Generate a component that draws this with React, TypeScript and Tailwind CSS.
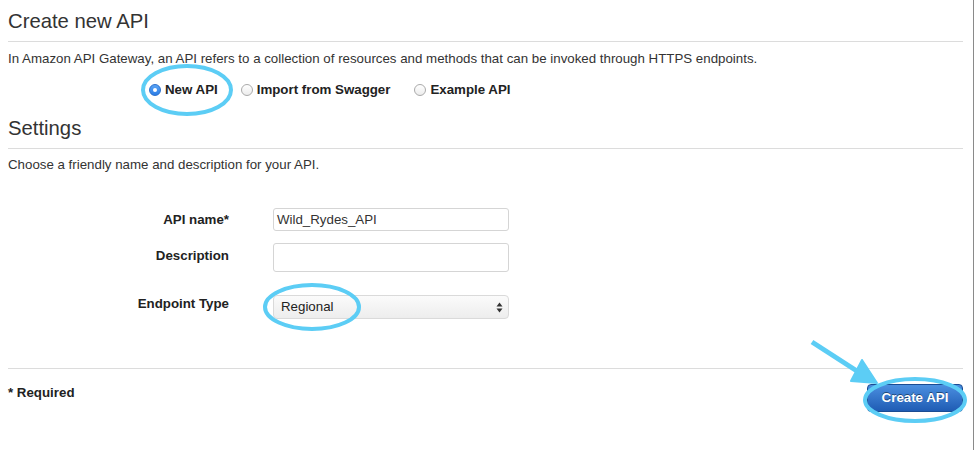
import React from "react";

function Radio({ checked, label, className }: { checked?: boolean; label: string; className?: string }) {
  return (
    <div className={"flex items-center " + (className || "")}>
      {checked ? (
        <span className="w-[12px] h-[12px] rounded-full bg-gradient-to-b from-[#5aa4f5] to-[#2a7de6] border border-[#2a6fcc] flex items-center justify-center">
          <span className="w-[4px] h-[4px] rounded-full bg-white" />
        </span>
      ) : (
        <span className="w-[12px] h-[12px] rounded-full bg-gradient-to-b from-white to-[#ececec] border border-[#aaa]" />
      )}
      <span className="ml-[4px] font-bold text-[#222]">{label}</span>
    </div>
  );
}

export default function App() {
  return (
    <div
      className="relative w-[974px] h-[450px] bg-white flex text-[#333] overflow-hidden"
      style={{ fontFamily: '"Liberation Sans", Arial, sans-serif' }}
    >
      <div className="flex-1 pl-2 pr-[10px] text-[13.3px] leading-[16px]">
        <h1 className="pt-[10px] text-[20.3px] leading-[23px] pb-[8px] border-b border-[#dcdcdc] text-[#333]">
          Create new API
        </h1>
        <p className="mt-[9px]">
          In Amazon API Gateway, an API refers to a collection of resources and methods that can be invoked through HTTPS endpoints.
        </p>
        <div className="mt-[15px] h-[16px] flex items-center pl-[141px]">
          <Radio checked label="New API" />
          <Radio label="Import from Swagger" className="ml-[23px]" />
          <Radio label="Example API" className="ml-[24px]" />
        </div>
        <h2 className="mt-[19px] text-[20.3px] leading-[23px] pb-[8px] border-b border-[#dcdcdc] text-[#333]">
          Settings
        </h2>
        <p className="mt-[8px]">Choose a friendly name and description for your API.</p>

        <div className="mt-[35px] flex items-start">
          <div className="w-[221px] text-right font-bold text-[#222] pt-[4px]">API name*</div>
          <div className="ml-[44px] w-[236px] h-[23px] border border-[#d5d5d5] rounded-[3px] flex items-center pl-[3px]">
            Wild_Rydes_API
          </div>
        </div>
        <div className="mt-[12px] flex items-start">
          <div className="w-[221px] text-right font-bold text-[#222] pt-[5px]">Description</div>
          <div className="ml-[44px] w-[236px] h-[29px] border border-[#d5d5d5] rounded-[3px]" />
        </div>
        <div className="mt-[23px] flex items-start">
          <div className="w-[221px] text-right font-bold text-[#222] pt-[1px]">Endpoint Type</div>
          <div className="ml-[44px] w-[236px] h-[24px] border border-[#dadada] rounded-[4px] bg-gradient-to-b from-[#fbfbfb] to-[#ededed] flex items-center justify-between pl-[7px] pr-[5px]">
            <span className="text-[#222]">Regional</span>
            <svg width="7" height="11" viewBox="0 0 7 11">
              <path d="M3.5 0.5 L6.5 4.5 L0.5 4.5 Z" fill="#333" />
              <path d="M3.5 10.5 L6.5 6.5 L0.5 6.5 Z" fill="#333" />
            </svg>
          </div>
        </div>

        <div className="mt-[49px] border-t border-[#dcdcdc]" />
        <div className="mt-[15px] flex items-start justify-between">
          <div className="mt-[1px] font-bold text-[#222]">* Required</div>
          <button
            className="w-[96px] h-[28px] rounded-[4px] border border-[#1a4c93] bg-gradient-to-b from-[#4b8fe0] to-[#1f5cb4] text-white font-bold text-[13.3px]"
            style={{ textShadow: "0 -1px 0 rgba(0,0,0,0.45)" }}
          >
            Create API
          </button>
        </div>
      </div>
      <div className="w-px bg-[#8a8a8a]" />

      <svg className="absolute inset-0 pointer-events-none" width="974" height="450" viewBox="0 0 974 450">
        <g fill="none" stroke="#5ccdf5" strokeWidth="4">
          <ellipse cx="187" cy="90" rx="44" ry="24" />
          <ellipse cx="312" cy="307" rx="47" ry="22" />
          <ellipse cx="915" cy="400" rx="50" ry="21" />
          <line x1="812" y1="342" x2="860" y2="373" strokeWidth="5" />
        </g>
        <path d="M877 383 L851 381 L862 360 Z" fill="#5ccdf5" stroke="#5ccdf5" strokeWidth="2" strokeLinejoin="round" />
      </svg>
    </div>
  );
}
